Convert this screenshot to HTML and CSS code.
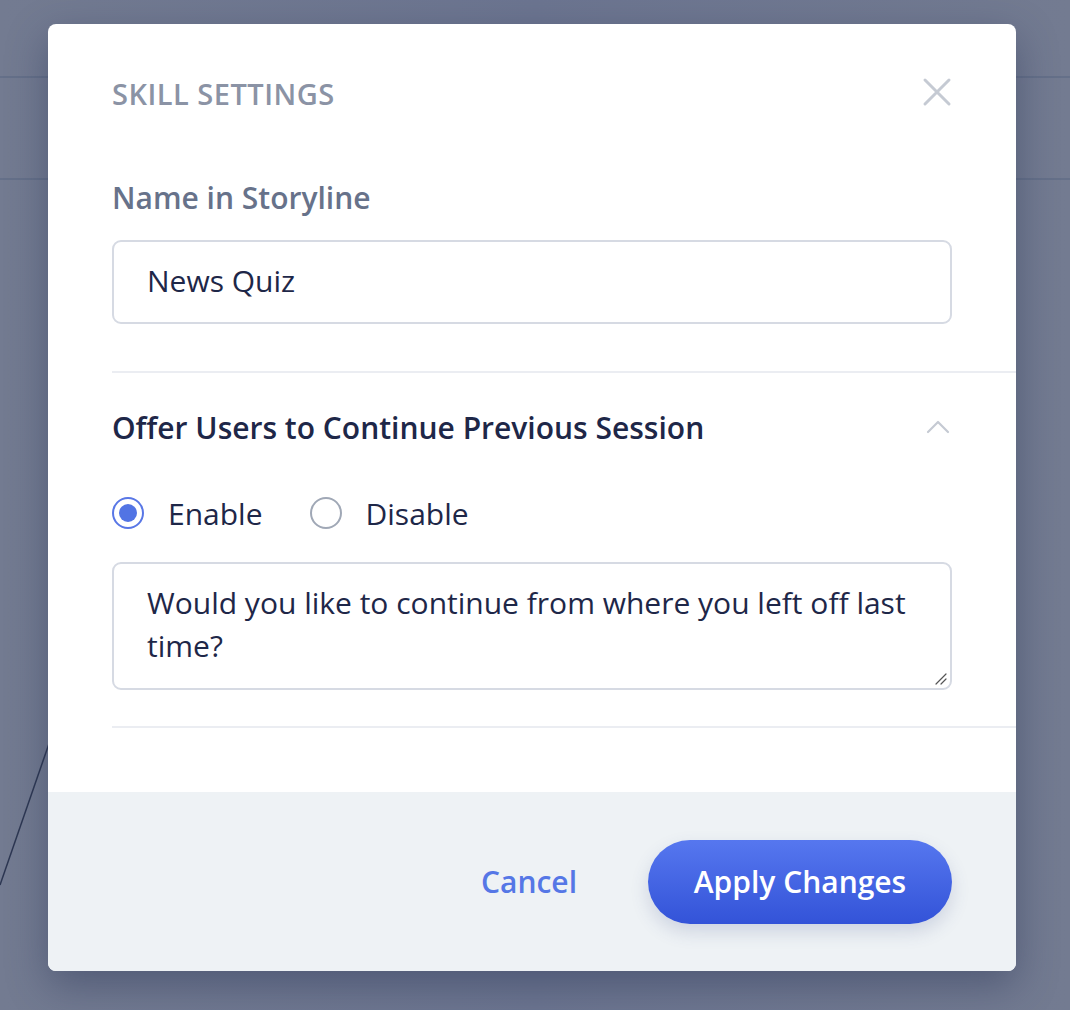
FILE: index.html
```html
<!DOCTYPE html>
<html lang="en">
<head>
<meta charset="utf-8">
<title>Skill Settings</title>
<link rel="stylesheet" href="styles.css">
</head>
<body>
<div class="app-bg">
  <div class="bg-topbar"></div>
  <div class="bg-subbar"></div>
  <svg class="bg-edge" width="60" height="200" viewBox="0 0 60 200"><line x1="52" y1="0" x2="0" y2="150" stroke="#2d3752" stroke-width="1.5"/></svg>
</div>

<div class="modal">
  <div class="modal-body">
    <div class="modal-head">
      <h1 class="modal-title">SKILL SETTINGS</h1>
      <button class="close-btn" aria-label="Close">
        <svg width="30" height="30" viewBox="0 0 30 30"><path d="M3 3 L27 27 M27 3 L3 27" stroke="#c5cad3" stroke-width="3" stroke-linecap="round"/></svg>
      </button>
    </div>

    <label class="field-label">Name in Storyline</label>
    <div class="text-input">News Quiz</div>

    <div class="divider"></div>

    <div class="section-head">
      <h2 class="section-title">Offer Users to Continue Previous Session</h2>
      <svg class="chevron" width="24" height="16" viewBox="0 0 24 16"><path d="M2 14 L12 4 L22 14" fill="none" stroke="#c5cad3" stroke-width="2.2" stroke-linecap="round" stroke-linejoin="round"/></svg>
    </div>

    <div class="radio-row">
      <span class="radio checked"><span class="radio-dot"></span></span>
      <span class="radio-label">Enable</span>
      <span class="radio"></span>
      <span class="radio-label">Disable</span>
    </div>

    <div class="textarea">Would you like to continue from where you left off last time?
      <svg class="grip" width="14" height="14" viewBox="0 0 14 14"><path d="M13 3 L3 13 M13 8 L8 13" stroke="#555" stroke-width="1.2" stroke-linecap="round"/></svg>
    </div>

    <div class="divider divider-bottom"></div>
  </div>

  <div class="modal-footer">
    <button class="btn-link">Cancel</button>
    <button class="btn-primary">Apply Changes</button>
  </div>
</div>
</body>
</html>
```

FILE: styles.css
```css
* { box-sizing: border-box; }

html, body {
  margin: 0;
  padding: 0;
  height: 100%;
}

body {
  background: linear-gradient(90deg, #737b91 0%, #6c7590 50%, #737b91 100%);
  font-family: "Open Sans", "Noto Sans", sans-serif;
  overflow: hidden;
  position: relative;
  width: 1070px;
  height: 1010px;
}

.app-bg {
  height: 100%;
}

.bg-topbar {
  height: 78px;
  border-bottom: 2px solid #657089;
}

.bg-subbar {
  height: 102px;
  border-bottom: 2px solid #657089;
}

.bg-edge {
  position: absolute;
  left: 0;
  top: 735px;
}

.modal {
  position: absolute;
  left: 48px;
  top: 24px;
  width: 968px;
  height: 947px;
  background: #fff;
  border-radius: 8px;
  overflow: hidden;
  box-shadow: 0 14px 40px rgba(40, 52, 85, 0.45);
  display: flex;
  flex-direction: column;
}

.modal-body {
  flex: 1;
  padding: 0 0 0 64px;
}

.modal-head {
  display: flex;
  align-items: center;
  justify-content: space-between;
  height: 138px;
  padding-right: 64px;
}

.modal-title {
  margin: 0;
  font-size: 29px;
  font-weight: 600;
  color: #8b93a5;
  letter-spacing: 0.5px;
}

.close-btn {
  border: 0;
  background: none;
  padding: 0;
  margin-right: 0;
  margin-top: -2px;
  width: 30px;
  height: 30px;
  display: flex;
}

.field-label {
  display: block;
  margin-top: 16px;
  font-size: 30px;
  font-weight: 600;
  color: #67728a;
  line-height: 40px;
}

.text-input {
  margin-top: 22px;
  margin-right: 64px;
  height: 84px;
  border: 2px solid #d6dae3;
  border-radius: 9px;
  padding: 0 33px 3px;
  display: flex;
  align-items: center;
  font-size: 30px;
  color: #1e2748;
}

.divider {
  height: 2px;
  background: #ebedf2;
  margin-top: 47px;
}

.section-head {
  display: flex;
  align-items: center;
  justify-content: space-between;
  padding-right: 66px;
  margin-top: 34px;
  height: 40px;
}

.section-title {
  margin: 0;
  font-size: 30px;
  font-weight: 600;
  color: #1e2748;
}

.chevron {
  margin-top: -3px;
}

.radio-row {
  display: flex;
  align-items: center;
  margin-top: 46px;
  height: 40px;
}

.radio {
  width: 32px;
  height: 32px;
  border-radius: 50%;
  border: 2px solid #a0a8b6;
  display: flex;
  align-items: center;
  justify-content: center;
  flex: none;
}

.radio.checked {
  border-color: #5977e6;
}

.radio-dot {
  width: 18px;
  height: 18px;
  border-radius: 50%;
  background: #5274e4;
}

.radio-label {
  font-size: 30px;
  color: #1e2748;
  margin-left: 24px;
  margin-right: 47px;
}

.textarea {
  position: relative;
  margin-top: 29px;
  margin-right: 64px;
  height: 128px;
  border: 2px solid #d6dae3;
  border-radius: 9px;
  padding: 17px 33px;
  font-size: 30px;
  line-height: 43px;
  color: #1e2748;
}

.grip {
  position: absolute;
  right: 3px;
  bottom: 3px;
}

.divider-bottom {
  margin-top: 36px;
}

.modal-footer {
  height: 179px;
  background: #eef2f5;
  display: flex;
  align-items: center;
  justify-content: flex-end;
  padding-right: 64px;
}

.btn-link {
  border: 0;
  background: none;
  font-family: inherit;
  font-size: 30px;
  font-weight: 600;
  color: #5577e6;
  padding: 0;
  margin-right: 71px;
}

.btn-primary {
  border: 0;
  height: 84px;
  width: 304px;
  border-radius: 42px;
  background: linear-gradient(180deg, #5677ef 0%, #3353d8 100%);
  color: #fff;
  font-family: inherit;
  font-size: 30px;
  font-weight: 600;
  box-shadow: 0 8px 18px rgba(60, 80, 140, 0.18);
}
```
